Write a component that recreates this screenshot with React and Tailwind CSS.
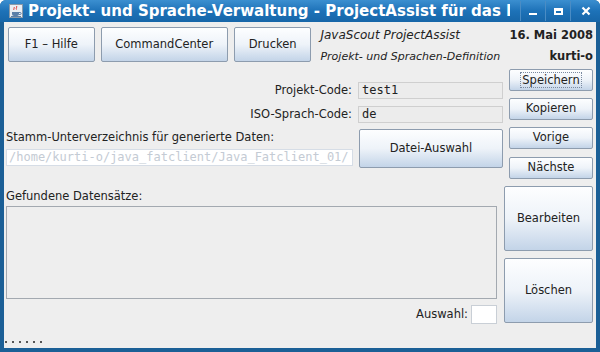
import React from "react";

const F = { fontFamily: '"DejaVu Sans", "Liberation Sans", sans-serif' };
const M = { fontFamily: '"DejaVu Sans Mono", "Liberation Mono", monospace' };

function Btn({ className = "", children }) {
  return (
    <div
      className={
        "flex items-center justify-center border border-[#8d9cae] rounded-[2px] bg-gradient-to-b from-[#fdfeff] via-[#eef3f9] to-[#c3d4e8] text-[11.5px] text-[#222] whitespace-nowrap" +
        " " +
        className
      }
    >
      {children}
    </div>
  );
}

export default function App() {
  return (
    <div className="w-[600px] h-[352px] bg-[#1b5f96] flex flex-col overflow-hidden rounded-t-[6px]" style={F}>
      {/* title bar */}
      <div className="h-[22px] flex items-center bg-gradient-to-b from-[#3b8fd0] via-[#1d72b8] to-[#1766a8] text-white">
        <svg width="14" height="14" viewBox="0 0 14 14" className="ml-[9px] mr-[5px] shrink-0">
          <rect x="0.5" y="0.5" width="13" height="13" fill="#e9eef3" stroke="#8a9aa8" />
          <path d="M3 8h7v2a2 2 0 0 1-2 2H5a2 2 0 0 1-2-2z" fill="#5a7fa8" />
          <path d="M10 8.5h1.2a1 1 0 0 1 0 2H10" fill="none" stroke="#5a7fa8" />
          <path d="M5 3c1 1-1 2 0 3M7.5 2c1 1.2-1 2.2 0 3.5" fill="none" stroke="#e0322b" strokeWidth="1" />
          <rect x="2" y="12" width="10" height="1" fill="#5a7fa8" />
        </svg>
        <div className="text-[15px] font-bold whitespace-nowrap overflow-hidden w-[482px] leading-[20px]">
          Projekt- und Sprache-Verwaltung - ProjectAssist für das Projekt
        </div>
        <div className="flex-1" />
        <div className="flex h-[22px] items-center">
          <div className="w-[25px] h-[20px] flex items-center justify-center border-l border-[#4a8cc4]">
            <div className="w-[8px] h-[2px] bg-white mt-[6px]" />
          </div>
          <div className="w-[25px] h-[20px] flex items-center justify-center border-l border-[#4a8cc4]">
            <div className="w-[9px] h-[7px] border-2 border-white border-t-[3px]" />
          </div>
          <div className="w-[30px] h-[20px] flex items-center justify-center border-l border-[#4a8cc4]">
            <svg width="10" height="10" viewBox="0 0 10 10">
              <path d="M1.5 1.5l7 7M8.5 1.5l-7 7" stroke="white" strokeWidth="2.2" />
            </svg>
          </div>
        </div>
      </div>

      {/* content */}
      <div className="flex-1 mx-[4px] mb-[4px] bg-[#eeeeee] flex flex-col text-[#222]">
        {/* top row */}
        <div className="flex h-[35px] mt-[5px] pl-[4px]">
          <Btn className="w-[87px] h-[35px]">F1 – Hilfe</Btn>
          <Btn className="w-[128px] h-[35px] ml-[6px]">CommandCenter</Btn>
          <Btn className="w-[78px] h-[35px] ml-[6px]">Drucken</Btn>
          <div className="ml-[9px] flex flex-col w-[190px] whitespace-nowrap">
            <div className="text-[12px] italic leading-[14px] mt-[1px]">JavaScout ProjectAssist</div>
            <div className="text-[11px] italic leading-[13px] mt-[8px]">Projekt- und Sprachen-Definition</div>
          </div>
          <div className="flex-1 flex flex-col items-end pr-[3px] whitespace-nowrap">
            <div className="text-[11.5px] font-bold leading-[14px] mt-[1px]">16. Mai 2008</div>
            <div className="text-[11.5px] font-bold leading-[14px] mt-[7px]">kurti-o</div>
          </div>
        </div>

        {/* main */}
        <div className="flex flex-1">
          {/* left */}
          <div className="w-[500px] flex flex-col text-[11.5px]">
            <div className="flex items-center mt-[20px] h-[17px]">
              <div className="w-[348px] text-right">Projekt-Code:</div>
              <div className="ml-[6px] w-[145px] h-[17px] border border-[#cfcfcf] bg-[#ececec] text-[12px] leading-[15px] pl-[3px]" style={M}>test1</div>
            </div>
            <div className="flex items-center mt-[7px] h-[17px]">
              <div className="w-[348px] text-right">ISO-Sprach-Code:</div>
              <div className="ml-[6px] w-[145px] h-[17px] border border-[#cfcfcf] bg-[#ececec] text-[12px] leading-[15px] pl-[3px]" style={M}>de</div>
            </div>
            <div className="flex mt-[6px]">
              <div className="flex flex-col pl-[2px] w-[353px]">
                <div className="leading-[14px] mt-[1px]">Stamm-Unterverzeichnis für generierte Daten:</div>
                <div className="mt-[5px] w-[347px] h-[17px] border border-[#d6dde6] bg-white text-[12px] leading-[15px] pl-[2px] text-[#c4cbd4] whitespace-nowrap overflow-hidden" style={M}>
                  /home/kurti-o/java_fatclient/Java_Fatclient_01/
                </div>
              </div>
              <Btn className="w-[144px] h-[39px] ml-[2px]">Datei-Auswahl</Btn>
            </div>
            <div className="leading-[14px] mt-[21px] pl-[2px]">Gefundene Datensätze:</div>
            <div className="ml-[2px] mt-[3px] w-[491px] h-[93px] border border-[#a3a9b0] bg-[#eeeeee]" />
            <div className="flex items-center justify-end h-[19px] mt-[6px] w-[493px]">
              <div>Auswahl:</div>
              <div className="ml-[3px] w-[26px] h-[19px] border border-[#c9cfd6] bg-white" />
            </div>
            <div className="flex gap-[5px] ml-[1px] mt-[17px]">
              {[0, 1, 2, 3, 4, 5].map((i) => (
                <div key={i} className="w-[2px] h-[2px] bg-[#555]" />
              ))}
            </div>
          </div>

          {/* right */}
          <div className="flex flex-col items-end w-[89px] mt-[7px]">
            <Btn className="w-[84px] h-[22px]">
              <span className="border border-dotted border-[#7a8aa0] px-[1px] leading-[14px]">Speichern</span>
            </Btn>
            <Btn className="w-[84px] h-[22px] mt-[7px]">Kopieren</Btn>
            <Btn className="w-[84px] h-[22px] mt-[7px]">Vorige</Btn>
            <Btn className="w-[84px] h-[22px] mt-[8px]">Nächste</Btn>
            <Btn className="w-[89px] h-[65px] mt-[7px]">Bearbeiten</Btn>
            <Btn className="w-[89px] h-[65px] mt-[7px]">Löschen</Btn>
          </div>
        </div>
      </div>
    </div>
  );
}
